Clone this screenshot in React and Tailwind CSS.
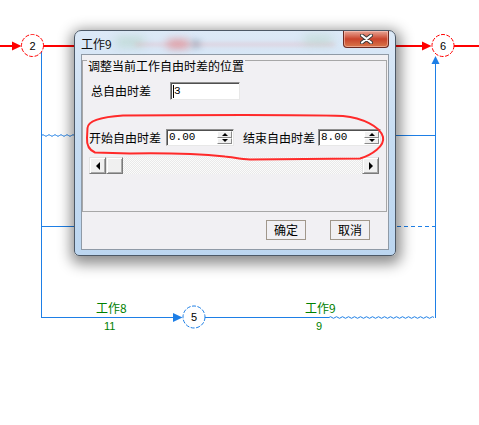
import React from 'react';

const RED = '#ff0000';
const BLUE = '#1e7fe6';
const GREEN = '#008000';

// little zigzag used for free-float segments
function wave(x1, x2, y) {
  let d = `M${x1} ${y} Q${x1 + 1.5} ${y - 1.6} ${x1 + 3} ${y}`;
  for (let x = x1 + 6; x <= x2; x += 3) d += ` T${x} ${y}`;
  return d;
}

function Node({ cx, cy, color, label }) {
  return (
    <g>
      <circle cx={cx} cy={cy} r="11" fill="#fff" stroke={color} strokeDasharray="4 1.5" />
      <text x={cx} y={cy + 4} textAnchor="middle" fontSize="11" fontFamily="Liberation Sans, sans-serif" fill="#000">
        {label}
      </text>
    </g>
  );
}

function Diagram() {
  return (
    <svg className="absolute left-0 top-0" width="479" height="425" viewBox="0 0 479 425">
      {/* critical path */}
      <line x1="0" y1="46" x2="14" y2="46" stroke={RED} strokeWidth="2" />
      <polygon points="12,41.5 21.5,46 12,50.5" fill={RED} />
      <line x1="43" y1="46" x2="80" y2="46" stroke={RED} strokeWidth="2" />
      <line x1="390" y1="46" x2="424" y2="46" stroke={RED} strokeWidth="2" />
      <polygon points="422,41.5 431.5,46 422,50.5" fill={RED} />
      <line x1="454" y1="46" x2="479" y2="46" stroke={RED} strokeWidth="2" />

      {/* blue branch */}
      <line x1="41.5" y1="52" x2="41.5" y2="318" stroke={BLUE} />
      <path d={wave(41.5, 78, 135.5)} fill="none" stroke={BLUE} />
      <line x1="41.5" y1="226.5" x2="80" y2="226.5" stroke={BLUE} />
      <line x1="390" y1="135.5" x2="435.5" y2="135.5" stroke={BLUE} />
      <line x1="390" y1="226.5" x2="435.5" y2="226.5" stroke={BLUE} strokeDasharray="4 3" />
      <line x1="435.5" y1="62" x2="435.5" y2="318" stroke={BLUE} />
      <polygon points="431.5,64 435.5,56 439.5,64" fill={BLUE} />

      <line x1="41.5" y1="317.5" x2="175" y2="317.5" stroke={BLUE} />
      <polygon points="173,313 182.5,317.5 173,322" fill={BLUE} />
      <line x1="205" y1="317.5" x2="329" y2="317.5" stroke={BLUE} />
      <path d={wave(329, 435, 317.5)} fill="none" stroke={BLUE} />

      <Node cx={32.5} cy={45.5} color={RED} label="2" />
      <Node cx={443} cy={45.5} color={RED} label="6" />
      <Node cx={194} cy={317} color={BLUE} label="5" />

      <g fill={GREEN} fontFamily="Noto Sans CJK SC, sans-serif" fontSize="12">
        <text x="96" y="313">工作8</text>
        <text x="305" y="313">工作9</text>
      </g>
      <g fill={GREEN} fontFamily="Liberation Sans, sans-serif" fontSize="11">
        <text x="104" y="330">11</text>
        <text x="316" y="330">9</text>
      </g>
    </svg>
  );
}

function SpinBox({ value, className }) {
  return (
    <div className={`flex h-[17px] border border-t-[#8f8f8f] border-l-[#8f8f8f] border-b-[#e8e8e8] border-r-[#e8e8e8] bg-white shadow-[inset_1px_1px_0_#505050] ${className}`}>
      <span className="flex-1 pl-[2px] pt-[1px] font-['Liberation_Mono',monospace] text-[11px] leading-[13px] text-black">{value}</span>
      <div className="flex w-[16px] flex-col py-px pr-px">
        <button className="flex flex-1 items-center justify-center border border-t-white border-l-white border-b-[#8a8a8a] border-r-[#8a8a8a] bg-[#f0f0f0]">
          <span className="h-0 w-0 border-x-[3px] border-b-[3px] border-x-transparent border-b-black" />
        </button>
        <button className="flex flex-1 items-center justify-center border border-t-white border-l-white border-b-[#8a8a8a] border-r-[#8a8a8a] bg-[#f0f0f0]">
          <span className="h-0 w-0 border-x-[3px] border-t-[3px] border-x-transparent border-t-black" />
        </button>
      </div>
    </div>
  );
}

function ScrollBtn({ children }) {
  return (
    <div className="flex h-[17px] w-[17px] items-center justify-center border border-t-[#e3e3e3] border-l-[#e3e3e3] border-b-[#7a7a7a] border-r-[#7a7a7a] bg-[#f0f0f0] shadow-[inset_1px_1px_0_#fff,inset_-1px_-1px_0_#a8a8a8]">
      {children}
    </div>
  );
}

function Dialog() {
  return (
    <div className="absolute left-[74px] top-[30px] flex h-[226px] w-[322px] flex-col overflow-hidden rounded-t-[7px] rounded-b-[5px] border border-[#4c5866] bg-linear-to-b from-[#dce9f7] via-[#c6dcf2] to-[#bcd6f0] shadow-[1px_4px_14px_4px_rgba(0,0,0,0.45)]">
      {/* title bar */}
      <div className="relative flex h-[23px] items-start">
        <div className="absolute left-[40px] top-[6px] h-[10px] w-[30px] rounded-full bg-[#9cc8a8] opacity-40 blur-[5px]" />
        <div className="absolute left-[92px] top-[9px] h-[8px] w-[22px] rounded-full bg-[#e25a5a] opacity-60 blur-[4px]" />
        <div className="absolute left-[116px] top-[9px] h-[8px] w-[10px] rounded-full bg-[#8fa3b6] opacity-70 blur-[3px]" />
        <div className="absolute left-[60px] top-[12px] h-[3px] w-[200px] bg-[#e7a3a8] opacity-40 blur-[2px]" />
        <div className="absolute left-[228px] top-[4px] h-[10px] w-[30px] rounded-full bg-[#a7cdb3] opacity-40 blur-[5px]" />
        <span className="relative pl-[6px] pt-[7px] text-[12px] leading-[12px] text-[#111]">工作9</span>
        <button className="relative ml-auto mr-[6px] flex h-[17px] w-[46px] items-center justify-center rounded-b-[4px] border border-t-0 border-[#6b2a22] bg-linear-to-b from-[#e7a596] via-[#c9432c] to-[#d8764a] shadow-[inset_0_0_0_1px_rgba(255,210,200,0.5)]">
          <svg width="13" height="10" viewBox="0 0 13 10">
            <path d="M2 1.5 L11 8.5 M11 1.5 L2 8.5" stroke="#3a3a3a" strokeWidth="4" strokeLinecap="round" />
            <path d="M2 1.5 L11 8.5 M11 1.5 L2 8.5" stroke="#fff" strokeWidth="2.2" strokeLinecap="round" />
          </svg>
        </button>
      </div>

      {/* client area */}
      <div className="mx-[6px] mb-[5px] flex flex-1 flex-col border border-[#8f9aa6] bg-[#f1f0f3]">
        <div className="relative mt-[5px] flex h-[152px] w-[305px] flex-col border border-[#a7a7a7]">
          <span className="absolute left-[4px] top-[-1px] bg-[#f1f0f3] px-px text-[12px] leading-[12px]">调整当前工作自由时差的位置</span>

          <div className="mt-[21px] flex h-[18px] items-center pl-[8px]">
            <span className="w-[79px] leading-[12px]">总自由时差</span>
            <div className="flex h-[18px] w-[70px] items-center border border-t-[#8f8f8f] border-l-[#8f8f8f] border-b-[#e8e8e8] border-r-[#e8e8e8] bg-white shadow-[inset_1px_1px_0_#505050]">
              <span className="ml-[2px] h-[13px] w-px bg-black" />
              <span className="font-['Liberation_Mono',monospace] text-[11px] leading-[13px]">3</span>
            </div>
          </div>

          <div className="mt-[29px] flex h-[17px] items-center pl-[6px]">
            <span className="w-[77px] leading-[12px]">开始自由时差</span>
            <SpinBox value="0.00" className="w-[68px]" />
            <span className="ml-[9px] w-[75px] leading-[12px]">结束自由时差</span>
            <SpinBox value="8.00" className="w-[63px]" />
          </div>

          <div className="ml-[6px] mt-[11px] flex h-[17px] w-[290px]">
            <ScrollBtn>
              <span className="h-0 w-0 border-y-[4px] border-r-[4px] border-y-transparent border-r-black" />
            </ScrollBtn>
            <ScrollBtn />
            <div className="flex-1 bg-[repeating-conic-gradient(#e9e9e9_0_25%,#fbfbfb_0_50%)] bg-[length:2px_2px]" />
            <ScrollBtn>
              <span className="h-0 w-0 border-y-[4px] border-l-[4px] border-y-transparent border-l-black" />
            </ScrollBtn>
          </div>
        </div>

        <div className="mt-[8px] flex justify-end gap-[24px] pr-[18px]">
          <button className="flex h-[20px] w-[40px] items-center justify-center border border-[#a0978b] bg-[#f1f0f3] text-[12px] leading-[12px]">确定</button>
          <button className="flex h-[20px] w-[40px] items-center justify-center border border-[#a0978b] bg-[#f1f0f3] text-[12px] leading-[12px]">取消</button>
        </div>
      </div>
    </div>
  );
}

function RedMark() {
  return (
    <svg className="pointer-events-none absolute left-0 top-0" width="479" height="425" viewBox="0 0 479 425">
      <path
        d="M123 115.5 C200 115 300 114.5 343 116 C362 118 380 126 383 137 C385 146 372 155 360 158.5 L250 159.5 C240 159 232 157 225 156.5 C200 154 160 153 130 153.5 L95 152.5 C89 150 86.5 146 87 138 L87.5 128 C88 121 100 117 123 115.5 Z"
        fill="none"
        stroke="#ff2a2a"
        strokeWidth="2"
      />
    </svg>
  );
}

export default function App() {
  return (
    <div className="relative h-[425px] w-[479px] overflow-hidden bg-white font-['Noto_Sans_CJK_SC','Noto_Sans',sans-serif] text-[12px] text-black">
      <Diagram />
      <Dialog />
      <RedMark />
    </div>
  );
}
